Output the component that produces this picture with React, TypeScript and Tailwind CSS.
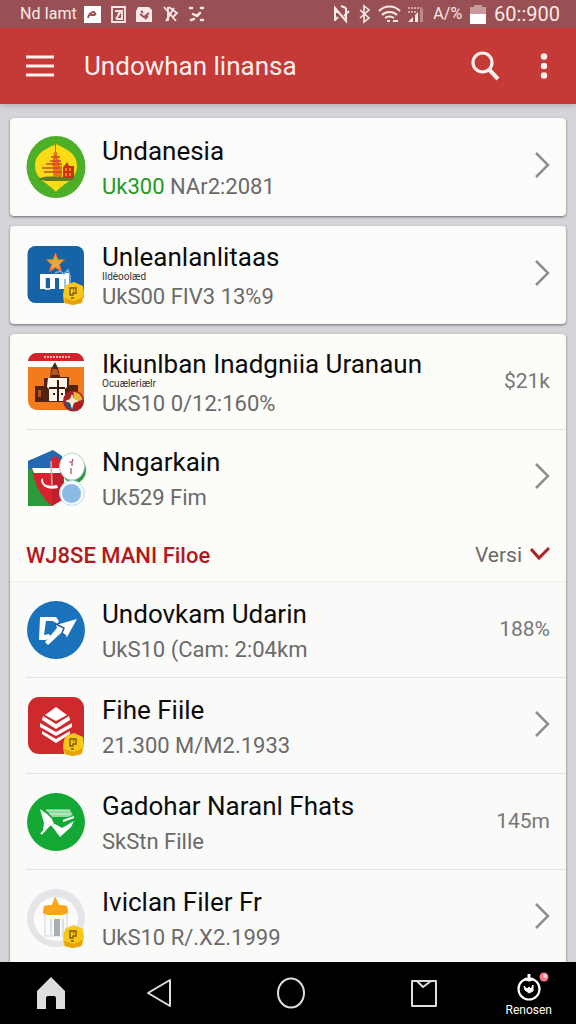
import type { ReactNode } from 'react'

type Item = {
  title: string
  lead?: string
  detail: string
  note?: string
  value?: string
  icon: ReactNode
}

function GoldBadge() {
  return (
    <g>
      <path d="M40 40l8-3 9 4 1 8-2 9-9 2-9-2-1-8 1-6z" fill="#f8c71c" />
      <path d="M38 53l1 5 8 2 8-2 2-6-9 4z" fill="#e8a10e" />
      <path d="M44 43h6v5h-3v2h-3zM47 45h1M45 53h3" fill="none" stroke="#7a560c" strokeWidth="1.3" />
    </g>
  )
}

function TempleIcon() {
  return (
    <svg viewBox="0 0 60 62" className="h-[62px] w-[60px]" aria-hidden="true">
      <ellipse cx="30" cy="31" rx="29.5" ry="31" fill="#4caf27" />
      <path d="M30 8C20 13 9 17 9 30c0 13 13 17 21 26 8-9 21-13 21-26C51 17 40 13 30 8z" fill="#fbdc14" />
      <path d="M29.500 8v10" stroke="#b8661c" strokeWidth="1" />
      <path d="M28 16h3l1 7h1l1 7h2v11H27V30h-1l1-7z" fill="#e8741e" />
      <path d="M25 21h9M24 25h11M20 28h16M16 32h18M18 36h18" stroke="#d5481c" strokeWidth="1.300" />
      <path d="M37 42V31l2-2 2-3 2 4h5v12z" fill="#c8321b" />
      <path d="M40 32v3M44 32v3M40 37v3M44 37v3" stroke="#f6a21b" strokeWidth="1.400" />
      <path d="M12 43c8-4 16-2 22-2s12 1 16 2l-8 2H20z" fill="#5c7a20" />
    </svg>
  )
}

function StarIcon() {
  return (
    <svg viewBox="0 0 60 60" className="size-[60px]" aria-hidden="true">
      <rect x="1.500" y="1" width="56.500" height="57" rx="8" fill="#1664a7" />
      <path d="M29.500 8l2.500 6.500 6.500.3-5 4.700 2 7-6-4-6 4 2-7-5-4.700 6.500-.3z" fill="#f6a23b" stroke="#e9632f" strokeWidth="1" />
      <path d="M14 29h24v15h-5V33h-4v11h-5V33h-5v11h-5z" fill="#fff" />
      <path d="M19 33v11M19 44h5" stroke="#fff" strokeWidth="1.500" />
      <path d="M38 28h5v12l-4 4h-2z" fill="#fff" />
      <path d="M29 28l5-2 4 3 4-4 2 6v8M39 34v10" fill="none" stroke="#7fb4e0" strokeWidth="1.500" />
      <GoldBadge />
    </svg>
  )
}

function FortIcon() {
  return (
    <svg viewBox="0 0 60 60" className="size-[60px]" aria-hidden="true">
      <rect x="2" y="1" width="56" height="57" rx="9" fill="#f47b1d" />
      <path d="M2 9c1-5 4-8 9-8h38c5 0 8 3 9 8z" fill="#d2222b" />
      <path d="M2 9h56v6H2z" fill="#fff" />
      <path d="M18 5h27" stroke="#f3b5b0" strokeWidth="2" strokeDasharray="2 1" />
      <path d="M29 10l3 6 2 9h9v8h9v17H9V34h9v-8h6l1-9z" fill="#51240f" />
      <path d="M22 26h19v9l-2 2v12H23V37l-2-2z" fill="#fff7ed" />
      <path d="M32 28v21M23 36h16M27 42h2M35 42h2" stroke="#3a1a0d" strokeWidth="2" />
      <path d="M26 17h5l2 6h-8zM12 38h3v7h-3zM18 38v8" fill="#b4551c" />
      <circle cx="47.500" cy="49" r="10.500" fill="#a82024" />
      <path d="M47.500 40a9 9 0 0 1 9 8l-9 2z" fill="#e9b73b" />
      <path d="M39 49l8 1 1 8a9 9 0 0 1-9-9z" fill="#2c537f" />
      <path d="M46 42l2 5 5 2-5 2-2 6-2-6-5-2 5-2z" fill="#f5ead0" />
    </svg>
  )
}

function ShieldIcon() {
  return (
    <svg viewBox="0 0 60 60" className="size-[60px]" aria-hidden="true">
      <path d="M2 13L27 3v55H2z" fill="#2a9a3d" />
      <path d="M2 13L27 2l9 6v13H2z" fill="#2369b1" />
      <path d="M6 20h19V10l5-2 5 5 3 10v28l-12 7C15 49 8 36 6 20z" fill="#d8232f" />
      <path d="M26 25l11-2v28l-11 7z" fill="#bd1f2d" />
      <path d="M6 20h28v5H8z" fill="#fff" />
      <path d="M25 13l1 24" stroke="#e9a5a9" strokeWidth="1.500" />
      <path d="M17 30c-1 7 5 9 14 7l1 3c-8 2-16 0-17-8z" fill="#fff" />
      <ellipse cx="48" cy="22" rx="12" ry="13.500" fill="#2b9a45" />
      <ellipse cx="46" cy="18.500" rx="12.500" ry="13.500" fill="#fff" stroke="#b7cfbf" strokeWidth="1" />
      <path d="M43 14h3l1-3M46 14v4M45 20v6" fill="none" stroke="#b64552" strokeWidth="1.200" />
      <circle cx="46" cy="45" r="12.500" fill="#f4f9fd" stroke="#c7dced" strokeWidth="1" />
      <circle cx="45.500" cy="45.500" r="9.500" fill="#8db9e5" />
    </svg>
  )
}

function SendIcon() {
  return (
    <svg viewBox="0 0 60 60" className="size-[60px]" aria-hidden="true">
      <circle cx="30" cy="30" r="29" fill="#1972ba" />
      <path d="M14 17h16l3 4-2 3-4-3h-7l-2 14 5-1 2 3-5 3h-7z" fill="#fff" />
      <path d="M30 25l21-6-10 18-6-4-13 12-3-3 12-14z" fill="#fff" />
      <path d="M28 23l10 5-2 5 4 3" fill="none" stroke="#1b5c9b" strokeWidth="1.500" />
    </svg>
  )
}

function LayersIcon() {
  return (
    <svg viewBox="0 0 60 60" className="size-[60px]" aria-hidden="true">
      <rect x="2" y="1" width="56" height="57" rx="11" fill="#ce2a2d" />
      <path d="M30 11l11 8-11 6-11-6z" fill="#fff" />
      <path d="M17 20l13 8 13-8 1 4-14 9-14-9zM14 27l16 9 16-9v4l-16 9-16-9zM16 35l14 8 14-8v3l-14 9-14-9z" fill="#fff" />
      <GoldBadge />
    </svg>
  )
}

function MailIcon() {
  return (
    <svg viewBox="0 0 60 60" className="size-[60px]" aria-hidden="true">
      <circle cx="30" cy="30" r="29" fill="#13a734" />
      <path d="M14 17l7 5 5 5 2 5-4 2-3 3-4 1 1-7z" fill="#fff" />
      <path d="M20 18h24l3 5-5 2H26z" fill="#8fdba0" />
      <path d="M20 18h24M24 22h21" stroke="#d9f3de" strokeWidth="1" />
      <path d="M25 33l4-1 7 4 12-7-3 6-11 10z" fill="#fff" />
      <path d="M37 29l11-4M15 42l5-5" stroke="#fff" strokeWidth="2" />
    </svg>
  )
}

function GateIcon() {
  return (
    <svg viewBox="0 0 60 60" className="size-[60px]" aria-hidden="true">
      <circle cx="30" cy="30" r="29" fill="#e3e5e9" />
      <circle cx="30" cy="31" r="22" fill="#fcfcfc" />
      <path d="M29 9l4 8 8 1 1 7-6 2H22l-5-2 1-7 8-1z" fill="#faa51a" />
      <path d="M19 26h22v22H19z" fill="#fafafa" stroke="#d4d5d8" strokeWidth="1" />
      <path d="M17 25l1-7 8-1 3-8 4 8 8 1 1 7-6 2H22z" fill="#faa51a" />
      <path d="M28 31h6v17h-6z" fill="#a9adb6" />
      <path d="M25 31v16M37 31v16" stroke="#d4d6da" strokeWidth="1.500" />
      <GoldBadge />
    </svg>
  )
}

const featured: Item[] = [
  { title: 'Undanesia', lead: 'Uk300', detail: 'NAr2:2081', icon: <TempleIcon /> },
  { title: 'Unleanlanlitaas', note: 'Ildèoolæd', detail: 'UkS00 FIV3 13%9', icon: <StarIcon /> },
]

const items: Item[] = [
  {
    title: 'Ikiunlban Inadgniia Uranaun',
    note: 'Ocuæleriælr',
    detail: 'UkS10 0/12:160%',
    value: '$21k',
    icon: <FortIcon />,
  },
  { title: 'Nngarkain', detail: 'Uk529 Fim', icon: <ShieldIcon /> },
]

const files: Item[] = [
  { title: 'Undovkam Udarin', detail: 'UkS10 (Cam: 2:04km', value: '188%', icon: <SendIcon /> },
  { title: 'Fihe Fiile', detail: '21.300 M/M2.1933', icon: <LayersIcon /> },
  { title: 'Gadohar Naranl Fhats', detail: 'SkStn Fille', value: '145m', icon: <MailIcon /> },
  { title: 'Iviclan Filer Fr', detail: 'UkS10 R/.X2.1999', icon: <GateIcon /> },
]

function Row({ item }: { item: Item }) {
  return (
    <a href="#" className="flex h-24 items-center">
      <span className="w-[60px] shrink-0">{item.icon}</span>
      <span className="ml-4 flex min-w-0 flex-1 flex-col pt-1 whitespace-nowrap">
        <span className={item.note ? 'text-[26px] leading-7 text-[#0c0c0c]' : 'pt-1 text-[26px] leading-8 text-[#0c0c0c]'}>
          {item.title}
        </span>
        {item.note && <span className="text-[10px] leading-3 text-[#333]">{item.note}</span>}
        <span className={item.note ? 'text-[22px] leading-7 text-[#6a6a6a]' : 'text-[22px] leading-10 text-[#6a6a6a]'}>
          {item.lead && <span className="text-[#1f9a25]">{item.lead} </span>}
          {item.detail}
        </span>
      </span>
      {item.value ? (
        <span className="pr-4 text-[21px] text-[#777]">{item.value}</span>
      ) : (
        <svg viewBox="0 0 16 28" className="mr-4 mb-1 h-7 w-4" fill="none" stroke="#8f8f8f" strokeWidth="2.500" aria-hidden="true">
          <path d="M2 2l12 12L2 26" />
        </svg>
      )}
    </a>
  )
}

function StatusBar() {
  return (
    <div className="flex h-7 shrink-0 items-center justify-between bg-[#985054] pr-4 pl-5 text-[#fbe9e8]">
      <div className="flex items-center gap-2.5">
        <span className="w-[54px] text-[16px] leading-6 whitespace-nowrap">Nd Iamt</span>
        <svg viewBox="0 0 122 20" className="h-5 w-[122px]" fill="none" stroke="currentColor" strokeWidth="1.800" aria-hidden="true">
          <path d="M0 2h17v17H0z" fill="#fff" stroke="none" />
          <path d="M4 14c1-5 3-6 6-6l2 3M6 11h5" stroke="#985054" />
          <path d="M28 3h13v15H28zM31 7h6l-5 8M34 10l4-3v8h-6" />
          <path d="M54 3h11l3 3v12H52V7z" fill="currentColor" stroke="none" />
          <path d="M56 10l4 3 5-4M57 7l2 2M61 15l3-3" stroke="#985054" />
          <path d="M80 3l12 14M84 3v14M90 4l-8 13M85 3l8 6-4 4" />
          <path d="M106 4h2M117 4h2M109 10l4 2 3-3M107 16l3-1M117 16h2" strokeLinecap="round" strokeWidth="2.500" />
        </svg>
      </div>
      <div className="flex items-center gap-2">
        <svg viewBox="0 0 92 20" className="h-5 w-[92px]" fill="none" stroke="currentColor" strokeWidth="2" aria-hidden="true">
          <path d="M2 17V4l11 13V4M1 8h5M11 12l5-5M8 2l5 2M5 13l-3 3" />
          <path d="M27 6l9 8-5 4V2l5 4-9 8" strokeWidth="1.600" />
          <path d="M46 7c6-6 15-6 21 0M49 11c4-4 11-4 15 0M52 14c3-2 6-2 9 0" />
          <path d="M54 17h3M60 17h5" />
          <path d="M75 18l5-5v5zM82 11l3-3v10h-3z" fill="currentColor" stroke="none" />
          <path d="M87 6l3-3v15h-3z" fill="#bd8a8c" stroke="none" />
          <path d="M75 4h13M75 8h8" stroke="#d0a5a6" strokeDasharray="2 1" />
        </svg>
        <span className="text-[16px] leading-6">A/%</span>
        <svg viewBox="0 0 16 19" className="h-[19px] w-4" aria-hidden="true">
          <path d="M4 0h8v2h4v8H0V2h4z" fill="#c79b9c" />
          <path d="M0 9h16v10H0z" fill="#fff" />
        </svg>
        <span className="text-[20px] leading-6">60::900</span>
      </div>
    </div>
  )
}

function AppBar() {
  return (
    <header className="z-10 flex h-[76px] shrink-0 items-center bg-[#c53a36] pr-6 pl-[26px] text-[#fff1ee] shadow-md">
      <button type="button" aria-label="Menu">
        <svg viewBox="0 0 28 22" className="h-[22px] w-7" stroke="currentColor" strokeWidth="3" aria-hidden="true">
          <path d="M0 2h28M0 11h28M0 20h28" />
        </svg>
      </button>
      <h1 className="ml-[30px] flex-1 text-[26px] whitespace-nowrap">Undowhan linansa</h1>
      <button type="button" aria-label="Search">
        <svg viewBox="0 0 30 30" className="size-[30px]" fill="none" stroke="currentColor" strokeWidth="3.200" aria-hidden="true">
          <circle cx="12.500" cy="11.500" r="9.500" />
          <path d="M19 18.500l9 9.500" strokeWidth="4" />
        </svg>
      </button>
      <button type="button" aria-label="More options" className="ml-9">
        <svg viewBox="0 0 16 28" className="h-7 w-4" fill="currentColor" aria-hidden="true">
          <circle cx="8" cy="4.500" r="3.200" />
          <circle cx="8" cy="14" r="3.200" />
          <circle cx="8" cy="23.500" r="3.200" />
        </svg>
      </button>
    </header>
  )
}

function NavBar() {
  return (
    <nav className="flex h-[62px] shrink-0 items-center justify-between bg-black pr-6 pl-9 text-[#dedede]">
      <button type="button" aria-label="Home">
        <svg viewBox="0 0 30 34" className="h-[34px] w-[30px]" fill="currentColor" aria-hidden="true">
          <path d="M15 1l14 14v18H20V22q0-2-2-2h-6q-2 0-2 2v11H1V15z" />
        </svg>
      </button>
      <button type="button" aria-label="Back" className="ml-3">
        <svg viewBox="0 0 26 30" className="h-[30px] w-[26px]" fill="none" stroke="currentColor" strokeWidth="2" strokeLinejoin="round" aria-hidden="true">
          <path d="M24 2v26L2 15z" />
        </svg>
      </button>
      <button type="button" aria-label="Overview" className="ml-9">
        <svg viewBox="0 0 30 32" className="h-8 w-[30px]" fill="none" stroke="currentColor" strokeWidth="2" aria-hidden="true">
          <ellipse cx="15" cy="16" rx="13" ry="14.500" />
        </svg>
      </button>
      <button type="button" aria-label="Bookmarks" className="ml-9">
        <svg viewBox="0 0 28 30" className="h-[30px] w-7" fill="none" stroke="currentColor" strokeWidth="2" strokeLinejoin="round" aria-hidden="true">
          <path d="M2 3h24v25H2zM7 3l6 6 8-6" />
        </svg>
      </button>
      <button type="button" className="flex flex-col items-center pt-1 text-white">
        <svg viewBox="0 0 44 30" className="h-[30px] w-11" fill="none" stroke="currentColor" strokeWidth="2.200" aria-hidden="true">
          <circle cx="22" cy="17" r="10.500" />
          <path d="M18 7l4 1 4-1M22 2v6" strokeWidth="3" />
          <path d="M17 14l3 3 2-2 2 2 2-4v6l-4 2-4-3z" fill="currentColor" strokeWidth="1" />
          <circle cx="37" cy="5" r="4.500" fill="#f37987" stroke="none" />
          <circle cx="38" cy="4" r="2" fill="#ffd6db" stroke="none" />
        </svg>
        <span className="text-[12px] leading-4">Renosen</span>
      </button>
    </nav>
  )
}

export default function App() {
  return (
    <div className="flex h-screen flex-col bg-[#d5d5d9] font-[Roboto,sans-serif]">
      <StatusBar />
      <AppBar />
      <main className="flex min-h-0 flex-1 flex-col gap-2.5 overflow-hidden px-2.5 pt-3.5">
        {featured.map((item) => (
          <section key={item.title} className="shrink-0 rounded-sm bg-[#fbfbf9] py-px pl-4 shadow-sm shadow-black/40">
            <Row item={item} />
          </section>
        ))}
        <section className="shrink-0 rounded-sm bg-[#fcfcf9] shadow-sm shadow-black/40">
          <div className="ml-4 divide-y divide-[#e2e2e0]">
            {items.map((item) => (
              <Row key={item.title} item={item} />
            ))}
          </div>
          <div className="flex h-14 items-center justify-between border-b border-[#ededeb] px-4 pt-1">
            <h2 className="text-[22px] font-medium text-[#b3181f]">WJ8SE MANI Filoe</h2>
            <button type="button" className="flex items-center gap-2 text-[21px] text-[#6a6a6a]">
              Versi
              <svg viewBox="0 0 20 14" className="mb-1 h-3.5 w-5" fill="none" stroke="#ad2226" strokeWidth="3" aria-hidden="true">
                <path d="M1 2l8 9L19 1" />
              </svg>
            </button>
          </div>
          <div className="bg-[#fafaf8] pl-4">
            <div className="divide-y divide-[#e2e2e0]">
              {files.map((item) => (
                <Row key={item.title} item={item} />
              ))}
            </div>
          </div>
        </section>
      </main>
      <NavBar />
    </div>
  )
}
